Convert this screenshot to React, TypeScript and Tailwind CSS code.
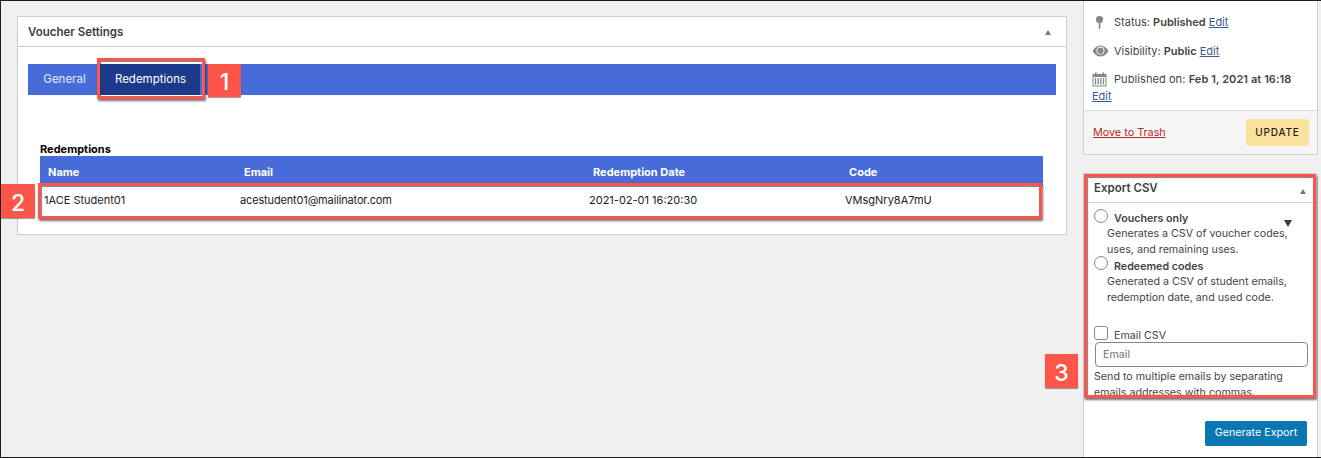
import React from "react";

function Annot({ className }: { className: string }) {
  return <div className={"absolute border-[3px] border-[#fd5549] shadow-[1px_2px_2px_rgba(0,0,0,0.55),inset_1px_1px_1px_rgba(0,0,0,0.5)] " + className} />;
}
function Badge({ n, className }: { n: string; className: string }) {
  return (
    <div className={"absolute flex items-center justify-center bg-[#fd5549] pt-[4px] text-white text-[23px] font-medium leading-none rounded-[1px] shadow-[0_1px_1px_rgba(0,0,0,0.4)] " + className}>
      {n}
    </div>
  );
}
const link = "text-[#3b5a8f] underline";

export default function App() {
  return (
    <div className="relative h-[458px] w-[1321px] overflow-hidden border-t border-b border-l border-[#1c1c1c] bg-[#f0f0f1] text-[11px] text-[#444] [font-family:Inter,'Liberation_Sans',sans-serif]">
      <div className="flex items-start">
        {/* main column */}
        <div className="ml-4 mt-[15px] h-[219px] w-[1050px] border border-[#ccd0d4] bg-white">
          <div className="flex h-[30px] items-center justify-between border-b border-[#ccd0d4] pl-[10px] pr-[15px] pt-[2px]">
            <span className="text-[11.5px] font-semibold text-[#3a3f44]">Voucher Settings</span>
            <span className="h-0 w-0 border-x-[3.5px] border-b-[5px] border-x-transparent border-b-[#72777c]" />
          </div>
          <div className="ml-[10px] mr-[10px] mt-[17px] flex h-[31px] items-stretch bg-[#476cd9] text-[11.5px]">
            <div className="flex w-[73px] items-center justify-center text-[#e3e9fa]">General</div>
            <div className="flex w-[99px] items-center justify-center bg-[#1d3a8a] text-white">Redemptions</div>
          </div>
          <div className="ml-[22px] mr-[23px] mt-[47px]">
            <div className="h-[14px] text-[11px] font-bold leading-[14px] text-black">Redemptions</div>
            <div className="grid h-[30px] grid-cols-[196px_349px_256px_1fr] items-center bg-[#476cd9] pl-[8px] pt-[2px] text-[11px] font-bold text-white">
              <span>Name</span>
              <span>Email</span>
              <span>Redemption Date</span>
              <span>Code</span>
            </div>
            <div className="grid h-[29px] grid-cols-[196px_349px_256px_1fr] items-center pl-[4px] text-[11px] text-[#222]">
              <span>1ACE Student01</span>
              <span className="tracking-[-0.15px]">acestudent01@mailinator.com</span>
              <span>2021-02-01 16:20:30</span>
              <span>VMsgNry8A7mU</span>
            </div>
          </div>
        </div>

        {/* sidebar */}
        <div className="ml-4 flex w-[235px] flex-col">
          <div className="h-[154px] border-x border-b border-[#ccd0d4] bg-white">
            <div className="h-[109px] pl-2 pt-[13px] text-[11px]">
              <div className="flex h-4 items-center">
                <svg width="10" height="15" viewBox="0 0 10 15" className="ml-[3px] mr-[9px]">
                  <circle cx="4.5" cy="4.5" r="3.6" fill="#82878c" />
                  <rect x="3.7" y="7" width="1.7" height="7" rx="0.8" fill="#82878c" />
                </svg>
                <span>Status: <b className="font-semibold">Published</b> <span className={link}>Edit</span></span>
              </div>
              <div className="mt-[13px] flex h-4 items-center">
                <svg width="17" height="12" viewBox="0 0 17 12" className="mr-[5px]">
                  <path d="M0.5 6C3 2 5.5 0.5 8.5 0.5S14 2 16.5 6C14 10 11.5 11.5 8.5 11.5S3 10 0.5 6Z" fill="#82878c" />
                  <circle cx="8.5" cy="5.5" r="4" fill="#fff" />
                  <circle cx="8.5" cy="5.7" r="3.1" fill="#82878c" />
                </svg>
                <span>Visibility: <b className="font-semibold">Public</b> <span className={link}>Edit</span></span>
              </div>
              <div className="mt-3 flex h-4 items-center">
                <svg width="15" height="15" viewBox="0 0 15 15" className="mr-[7px]">
                  <rect x="1" y="2.5" width="13" height="11.5" fill="none" stroke="#82878c" />
                  <rect x="1" y="2" width="13" height="3" fill="#82878c" />
                  <rect x="3" y="0.5" width="1.6" height="3" fill="#82878c" />
                  <rect x="10.4" y="0.5" width="1.6" height="3" fill="#82878c" />
                  <path d="M3.5 6v6.5M6.2 6v6.5M8.8 6v6.5M11.5 6v6.5" stroke="#82878c" strokeWidth="1.3" />
                </svg>
                <span className="tracking-[0.08px]">Published on: <b className="font-semibold">Feb 1, 2021 at 16:18</b></span>
              </div>
              <div className={"mt-[1px] " + link}>Edit</div>
            </div>
            <div className="flex h-[44px] items-center justify-between border-t border-[#dcdcde] bg-[#f5f5f5] pl-2 pr-2">
              <span className="ml-px mt-[2px] text-[10.8px] text-[#b32d2e] underline">Move to Trash</span>
              <span className="flex h-[27px] w-[63px] items-center justify-center rounded-[3px] bg-[#fae29c] text-[10px] font-medium tracking-[0.8px] text-[#1c1c1c]">UPDATE</span>
            </div>
          </div>

          <div className="mt-[18px] h-[284px] border-x border-t border-[#ccd0d4] bg-white">
            <div className="flex h-[29px] items-end justify-between border-b border-[#ccd0d4] pb-[5px] pl-[10px] pr-[11px]">
              <span className="text-[11.5px] font-semibold text-[#3a3f44]">Export CSV</span>
              <span className="mb-[3px] h-0 w-0 border-x-[3.5px] border-b-[5px] border-x-transparent border-b-[#72777c]" />
            </div>
            <div className="h-[192px] overflow-hidden pl-[10px] text-[10.7px]">
              <div className="relative mt-[7px] h-[14px]">
                <span className="absolute left-0 -top-px h-[14px] w-[14px] rounded-full border border-[#7e8993] bg-white" />
                <b className="absolute left-[20px] top-[1px] font-semibold">Vouchers only</b>
              </div>
              <div className="ml-[13px] mt-[2px] w-[200px] leading-[16px]">Generates a CSV of voucher codes,<br />uses, and remaining uses.</div>
              <div className="relative -mt-px h-[14px]">
                <span className="absolute left-0 -top-px h-[14px] w-[14px] rounded-full border border-[#7e8993] bg-white" />
                <b className="absolute left-[20px] top-[2px] font-semibold">Redeemed codes</b>
              </div>
              <div className="ml-[13px] mt-[3px] w-[200px] leading-[16px]">Generated a CSV of student emails,<br />redemption date, and used code.</div>
              <div className="relative mt-[21px] h-[14px]">
                <span className="absolute left-0 -top-px h-[14px] w-[14px] rounded-[3px] border border-[#7e8993] bg-white" />
                <span className="absolute left-[20px] top-[1px]">Email CSV</span>
              </div>
              <div className="ml-px mt-[1px] flex h-[25px] w-[213px] items-center rounded-[4px] border border-[#7e8993] pl-[7px] pt-[2px] text-[#72777c]">Email</div>
              <div className="mt-[2px] w-[215px] leading-[16px]">Send to multiple emails by separating emails addresses with commas.</div>
            </div>
            <div className="mt-[26px] flex justify-end pr-[10px]">
              <span className="flex h-[25px] w-[102px] items-center justify-center rounded-[2px] bg-[#0a77b3] text-[10.7px] text-white">Generate Export</span>
            </div>
          </div>
        </div>
      </div>

      {/* annotations */}
      <Annot className="left-[96px] top-[57px] h-[41px] w-[108px]" />
      <Annot className="left-[37px] top-[182px] h-[36px] w-[1004px]" />
      <Annot className="left-[1083px] top-[173px] h-[224px] w-[232px]" />
      <Badge n="1" className="left-[207px] top-[63px] h-[33px] w-[33px]" />
      <Badge n="2" className="left-0 top-[183px] h-[34px] w-[34px]" />
      <Badge n="3" className="left-[1044px] top-[353px] h-[34px] w-[33px]" />
      <span className="absolute left-[1283px] top-[219px] h-0 w-0 border-x-[4px] border-t-[7px] border-x-transparent border-t-[#3a3a3a]" />
    </div>
  );
}
